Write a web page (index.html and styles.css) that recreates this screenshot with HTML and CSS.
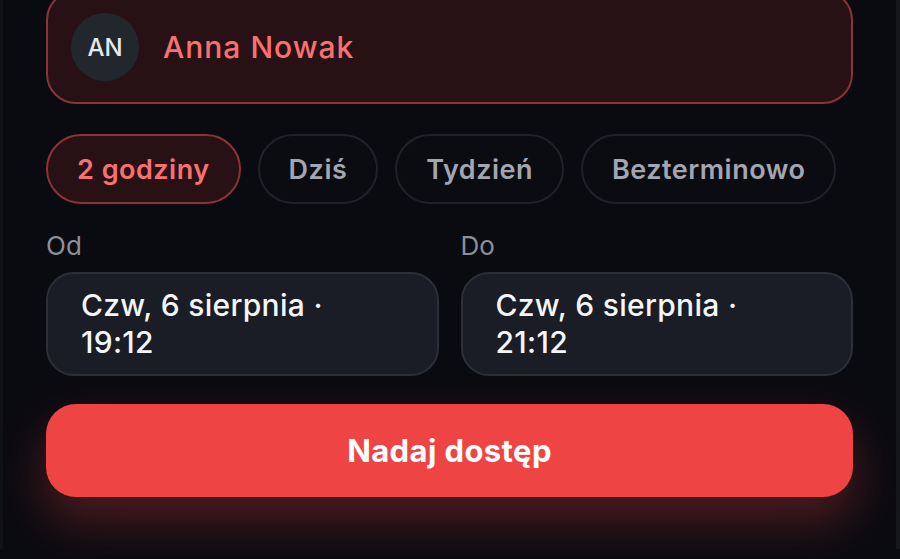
FILE: index.html
```html
<!DOCTYPE html>
<html lang="pl">
<head>
<meta charset="utf-8">
<link rel="stylesheet" href="styles.css">
</head>
<body>
<div class="screen">
  <div class="panel">
    <div class="person">
      <div class="avatar">AN</div>
      <div class="name">Anna Nowak</div>
    </div>
    <div class="chips">
      <div class="chip active">2 godziny</div>
      <div class="chip">Dziś</div>
      <div class="chip">Tydzień</div>
      <div class="chip">Bezterminowo</div>
    </div>
    <div class="range">
      <div class="field">
        <div class="label">Od</div>
        <div class="box">Czw, 6 sierpnia · 19:12</div>
      </div>
      <div class="field">
        <div class="label">Do</div>
        <div class="box">Czw, 6 sierpnia · 21:12</div>
      </div>
    </div>
    <button class="grant">Nadaj dostęp</button>
  </div>
</div>
</body>
</html>
```

FILE: styles.css
```css
html, body {
  margin: 0;
  padding: 0;
  background: #0a0b10;
  height: 100%;
  overflow: hidden;
}
body {
  font-family: Inter, "Noto Sans", "Liberation Sans", sans-serif;
}
.screen {
  height: 559px;
  border-left: 3px solid #101218;
  border-right: 4px solid #15171d;
  background: #0a0b10;
  box-sizing: border-box;
}
.panel {
  padding: 0 43px 0 43px;
  margin-top: -10px;
  display: flex;
  flex-direction: column;
}
.person {
  height: 114px;
  box-sizing: border-box;
  border: 2px solid #8d3236;
  background: #281114;
  border-radius: 30px;
  display: flex;
  align-items: center;
  padding-left: 23px;
  gap: 24px;
}
.avatar {
  width: 68px;
  height: 68px;
  border-radius: 50%;
  background: #22272e;
  color: #e6e8ec;
  font-size: 24px;
  font-weight: 500;
  display: flex;
  align-items: center;
  justify-content: center;
}
.name {
  color: #f87171;
  font-size: 30px;
  font-weight: 500;
  letter-spacing: 1px;
}
.chips {
  display: flex;
  gap: 17px;
  margin-top: 30px;
}
.chip {
  height: 70px;
  box-sizing: border-box;
  border-radius: 35px;
  border: 2px solid #1f2228;
  background: #0b0c11;
  color: #a3a6b0;
  font-size: 27px;
  font-weight: 600;
  letter-spacing: 0.5px;
  display: flex;
  align-items: center;
  padding: 0 29px;
}
.chip.active {
  border-color: #8d3236;
  background: #281114;
  color: #f87171;
}
.range {
  display: flex;
  gap: 22px;
  margin-top: 26px;
}
.field {
  flex: 1;
  display: flex;
  flex-direction: column;
}
.label {
  color: #8d9099;
  font-size: 26px;
  line-height: 32px;
}
.box {
  margin-top: 10px;
  height: 104px;
  box-sizing: border-box;
  background: #1a1d26;
  border: 2px solid #2c2f38;
  border-radius: 28px;
  color: #f4f5f7;
  font-size: 30px;
  font-weight: 500;
  letter-spacing: 0.3px;
  line-height: 37px;
  padding: 13px 90px 0 33px;
}
.grant {
  margin-top: 28px;
  height: 93px;
  border: none;
  border-radius: 30px;
  background: #ef4444;
  color: #ffffff;
  font-family: inherit;
  font-size: 31px;
  font-weight: 700;
  letter-spacing: 0.4px;
  box-shadow: 0 24px 50px rgba(239, 68, 68, 0.3);
}
```
